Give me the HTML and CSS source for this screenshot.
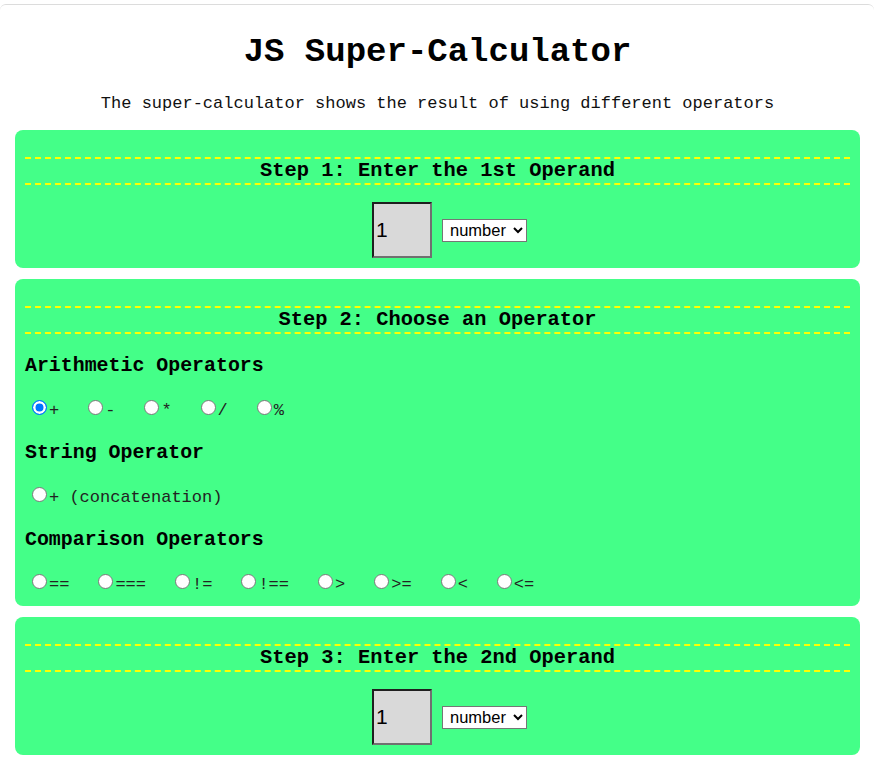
FILE: index.html
```html
<!DOCTYPE html>
<html lang="en">
<head>
<meta charset="utf-8">
<title>JS Super-Calculator</title>
<link rel="stylesheet" href="styles.css">
</head>
<body>
<div class="frame">
  <h1 class="title">JS Super-Calculator</h1>
  <p class="subtitle">The super-calculator shows the result of using different operators</p>

  <section class="card">
    <h3 class="step">Step 1: Enter the 1st Operand</h3>
    <div class="operand">
      <input class="num" type="text" value="1">
      <select class="type"><option>number</option><option>string</option><option>boolean</option></select>
    </div>
  </section>

  <section class="card card-ops">
    <h3 class="step">Step 2: Choose an Operator</h3>
    <h4 class="group">Arithmetic Operators</h4>
    <div class="options"><span class="opt"><input type="radio" name="op" id="o1" checked><label for="o1">+</label></span><span class="opt"><input type="radio" name="op" id="o2"><label for="o2">-</label></span><span class="opt"><input type="radio" name="op" id="o3"><label for="o3">*</label></span><span class="opt"><input type="radio" name="op" id="o4"><label for="o4">/</label></span><span class="opt"><input type="radio" name="op" id="o5"><label for="o5">%</label></span></div>
    <h4 class="group">String Operator</h4>
    <div class="options"><span class="opt"><input type="radio" name="op" id="o6"><label for="o6">+ (concatenation)</label></span></div>
    <h4 class="group">Comparison Operators</h4>
    <div class="options"><span class="opt"><input type="radio" name="op" id="c1"><label for="c1">==</label></span><span class="opt"><input type="radio" name="op" id="c2"><label for="c2">===</label></span><span class="opt"><input type="radio" name="op" id="c3"><label for="c3">!=</label></span><span class="opt"><input type="radio" name="op" id="c4"><label for="c4">!==</label></span><span class="opt"><input type="radio" name="op" id="c5"><label for="c5">&gt;</label></span><span class="opt"><input type="radio" name="op" id="c6"><label for="c6">&gt;=</label></span><span class="opt"><input type="radio" name="op" id="c7"><label for="c7">&lt;</label></span><span class="opt"><input type="radio" name="op" id="c8"><label for="c8">&lt;=</label></span></div>
  </section>

  <section class="card">
    <h3 class="step">Step 3: Enter the 2nd Operand</h3>
    <div class="operand">
      <input class="num" type="text" value="1">
      <select class="type"><option>number</option><option>string</option><option>boolean</option></select>
    </div>
  </section>
</div>
</body>
</html>
```

FILE: styles.css
```css
html, body {
  margin: 0;
  padding: 0;
  background: #ffffff;
}

body {
  font-family: "Liberation Mono", "Courier New", monospace;
  font-size: 17px;
  color: #000;
}

.frame {
  margin-top: 4px;
  border-top: 1px solid #dcdcdc;
  border-radius: 6px 6px 0 0;
  padding: 0 14px 10px 15px;
}

.title {
  margin: 27px 0 0;
  font-size: 34px;
  line-height: 40px;
  font-weight: bold;
  text-align: center;
}

.subtitle {
  margin: 22px 0 0;
  font-size: 17px;
  line-height: 20px;
  text-align: center;
  color: #111;
}

.card {
  margin-top: 11px;
  background: #44ff88;
  border-radius: 8px;
  padding: 27px 10px 10px;
}

.subtitle + .card {
  margin-top: 16px;
}

.step {
  margin: 0;
  border-top: 2px dashed #ffff00;
  border-bottom: 2px dashed #ffff00;
  font-size: 20.4px;
  line-height: 24px;
  font-weight: bold;
  text-align: center;
}

.operand {
  margin-top: 17px;
  display: flex;
  justify-content: center;
  align-items: center;
  gap: 10px;
  padding-left: 24px;
}

.num {
  box-sizing: border-box;
  width: 60px;
  height: 56px;
  margin: 0;
  padding: 1px 2px;
  background: #d9d9d9;
  border-style: solid;
  border-width: 2px;
  border-color: #1f1f1f #707070 #707070 #1f1f1f;
  font-family: "Liberation Sans", Arial, sans-serif;
  font-size: 21px;
  color: #000;
}

.type {
  height: 23px;
  margin: 0;
  padding: 0 1px 0 3px;
  background: #fff;
  border: 1px solid #767676;
  border-radius: 0;
  font-family: "Liberation Sans", Arial, sans-serif;
  font-size: 16.5px;
  color: #000;
}

.card-ops {
  padding-bottom: 9px;
}

.group {
  margin: 18px 0 0;
  font-size: 19.9px;
  line-height: 23px;
  font-weight: bold;
}

.step + .group {
  margin-top: 20px;
}

.options {
  margin-top: 22px;
  padding-left: 3px;
  line-height: 24px;
  font-size: 17px;
  color: #222;
}

.opt {
  margin-right: 25px;
}

.opt input {
  appearance: none;
  -webkit-appearance: none;
  box-sizing: border-box;
  margin: 0 2px 0 4px;
  width: 15px;
  height: 15px;
  border: 1px solid #7a7a7a;
  border-radius: 50%;
  background: #fff;
  vertical-align: 0;
}

.opt input:checked {
  border: 1.5px solid #0075ff;
  background: #0075ff;
  box-shadow: inset 0 0 0 2.5px #fff;
}
```
